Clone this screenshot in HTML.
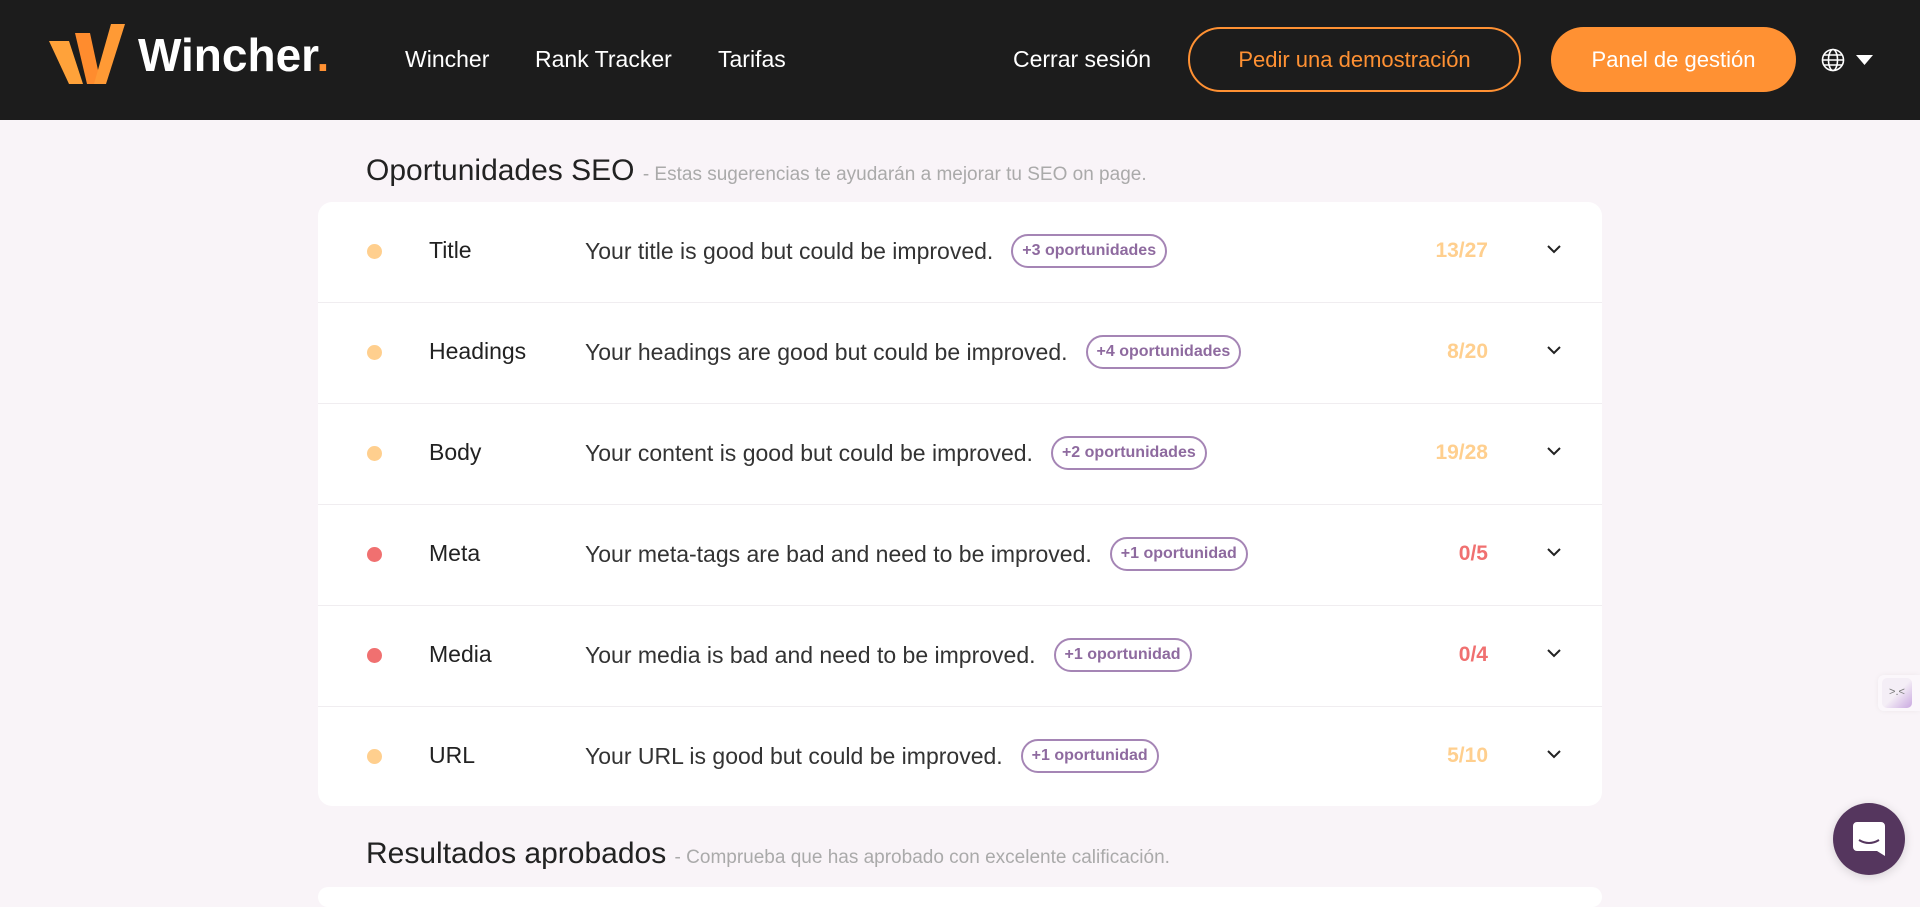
<!DOCTYPE html>
<html><head><meta charset="utf-8"><style>
*{box-sizing:border-box;margin:0;padding:0}
body{width:1920px;height:890px;overflow:hidden;background:#f9f4f8;font-family:"Liberation Sans",sans-serif;position:relative}
.hdr{position:absolute;left:0;top:0;width:1920px;height:120px;background:#1c1c1c}
.nav{position:absolute;top:46px;color:#fff;font-size:23px}
.btn{position:absolute;top:27px;height:65px;border-radius:33px;display:flex;align-items:center;justify-content:center;font-size:22px}
h2{position:absolute;left:366px;font-weight:normal;font-size:30px;color:#222}
h2 span{font-size:19px;color:#aaa}
.card{position:absolute;left:318px;top:202px;width:1284px;height:604px;background:#fff;border-radius:14px}
.row{position:relative;height:101px;border-bottom:1px solid #f0edf0}
.row:last-child{border-bottom:none}
.dot{position:absolute;left:49px;top:42px;width:15px;height:15px;border-radius:50%}
.lbl{position:absolute;left:111px;top:35px;font-size:23px;color:#222}
.msg{position:absolute;left:267px;top:31px;height:36px;font-size:23px;color:#333;display:flex;align-items:center}
.bdg{margin-left:18px;border:2.5px solid #a585b5;color:#8e6a9f;border-radius:17px;font-size:16px;font-weight:bold;padding:6px 9px}
.sc{position:absolute;right:114px;top:37px;font-size:21px;font-weight:bold}
.chev{position:absolute;left:1228px;top:42px}
</style></head><body>
<div class="hdr">
<svg style="position:absolute;left:49px;top:24px" width="76" height="60" viewBox="0 0 76 60"><polygon points="0,17 20,17 34,60 20,60" fill="#ffa23a"/><polygon points="26,9 41,9 52,60 38,60" fill="#ff8c2e"/><polygon points="62,0 76,0 57,60 45,60" fill="#ff9a35"/></svg>
<div style="position:absolute;left:138px;top:28px;color:#fff;font-size:46px;font-weight:bold">Wincher<span style="color:#ff9133">.</span></div>
<div class="nav" style="left:405px">Wincher</div>
<div class="nav" style="left:535px">Rank Tracker</div>
<div class="nav" style="left:718px">Tarifas</div>
<div class="nav" style="left:1013px">Cerrar sesión</div>
<div class="btn" style="left:1188px;width:333px;border:2.5px solid #ff9133;color:#ff9133">Pedir una demostración</div>
<div class="btn" style="left:1551px;width:245px;background:#ff9133;color:#fff">Panel de gestión</div>
<svg style="position:absolute;left:1821px;top:48px" width="24" height="24" viewBox="0 0 24 24" fill="none" stroke="#fff" stroke-width="1.6"><circle cx="12" cy="12" r="10.5"/><ellipse cx="12" cy="12" rx="4.5" ry="10.5"/><line x1="1.5" y1="12" x2="22.5" y2="12"/><line x1="3" y1="7" x2="21" y2="7"/><line x1="3" y1="17" x2="21" y2="17"/></svg>
<svg style="position:absolute;left:1856px;top:55px" width="17" height="11"><polygon points="0,0 17,0 8.5,10" fill="#fff"/></svg>
</div>
<h2 style="top:154px">Oportunidades SEO <span>- Estas sugerencias te ayudarán a mejorar tu SEO on page.</span></h2>
<div class="card">
<div class="row"><div class="dot" style="background:#ffcf8e"></div><div class="lbl">Title</div><div class="msg">Your title is good but could be improved.<span class="bdg">+3 oportunidades</span></div><div class="sc" style="color:#ffcf8e">13/27</div><svg class="chev" width="16" height="10"><polyline points="2,2 8,8 14,2" fill="none" stroke="#222" stroke-width="2"/></svg></div>
<div class="row"><div class="dot" style="background:#ffcf8e"></div><div class="lbl">Headings</div><div class="msg">Your headings are good but could be improved.<span class="bdg">+4 oportunidades</span></div><div class="sc" style="color:#ffcf8e">8/20</div><svg class="chev" width="16" height="10"><polyline points="2,2 8,8 14,2" fill="none" stroke="#222" stroke-width="2"/></svg></div>
<div class="row"><div class="dot" style="background:#ffcf8e"></div><div class="lbl">Body</div><div class="msg">Your content is good but could be improved.<span class="bdg">+2 oportunidades</span></div><div class="sc" style="color:#ffcf8e">19/28</div><svg class="chev" width="16" height="10"><polyline points="2,2 8,8 14,2" fill="none" stroke="#222" stroke-width="2"/></svg></div>
<div class="row"><div class="dot" style="background:#f07070"></div><div class="lbl">Meta</div><div class="msg">Your meta-tags are bad and need to be improved.<span class="bdg">+1 oportunidad</span></div><div class="sc" style="color:#f07070">0/5</div><svg class="chev" width="16" height="10"><polyline points="2,2 8,8 14,2" fill="none" stroke="#222" stroke-width="2"/></svg></div>
<div class="row"><div class="dot" style="background:#f07070"></div><div class="lbl">Media</div><div class="msg">Your media is bad and need to be improved.<span class="bdg">+1 oportunidad</span></div><div class="sc" style="color:#f07070">0/4</div><svg class="chev" width="16" height="10"><polyline points="2,2 8,8 14,2" fill="none" stroke="#222" stroke-width="2"/></svg></div>
<div class="row"><div class="dot" style="background:#ffcf8e"></div><div class="lbl">URL</div><div class="msg">Your URL is good but could be improved.<span class="bdg">+1 oportunidad</span></div><div class="sc" style="color:#ffcf8e">5/10</div><svg class="chev" width="16" height="10"><polyline points="2,2 8,8 14,2" fill="none" stroke="#222" stroke-width="2"/></svg></div>
</div>
<h2 style="top:837px">Resultados aprobados <span>- Comprueba que has aprobado con excelente calificación.</span></h2>
<div style="position:absolute;left:318px;top:887px;width:1284px;height:20px;background:#fff;border-radius:14px"></div>
<div style="position:absolute;left:1878px;top:675px;width:42px;height:36px;background:#fbf7fb;border-radius:6px 0 0 6px;box-shadow:0 0 6px rgba(0,0,0,.05)"></div>
<div style="position:absolute;left:1882px;top:678px;width:30px;height:30px;border-radius:5px;background:linear-gradient(135deg,#f4eef6 50%,#c9a8e0);font-size:11px;color:#777;text-align:center;line-height:28px">&gt;.&lt;</div>
<div style="position:absolute;left:1833px;top:803px;width:72px;height:72px;border-radius:50%;background:#55365e;box-shadow:0 2px 10px rgba(0,0,0,.15)"></div>
<svg style="position:absolute;left:1853px;top:822px" width="32" height="34" viewBox="0 0 32 34"><path d="M4 0H28a4 4 0 0 1 4 4V34L24 29H4a4 4 0 0 1-4-4V4a4 4 0 0 1 4-4Z" fill="#fff"/><path d="M6 18Q16 24 26 18" fill="none" stroke="#55365e" stroke-width="2"/></svg>
</body></html>
